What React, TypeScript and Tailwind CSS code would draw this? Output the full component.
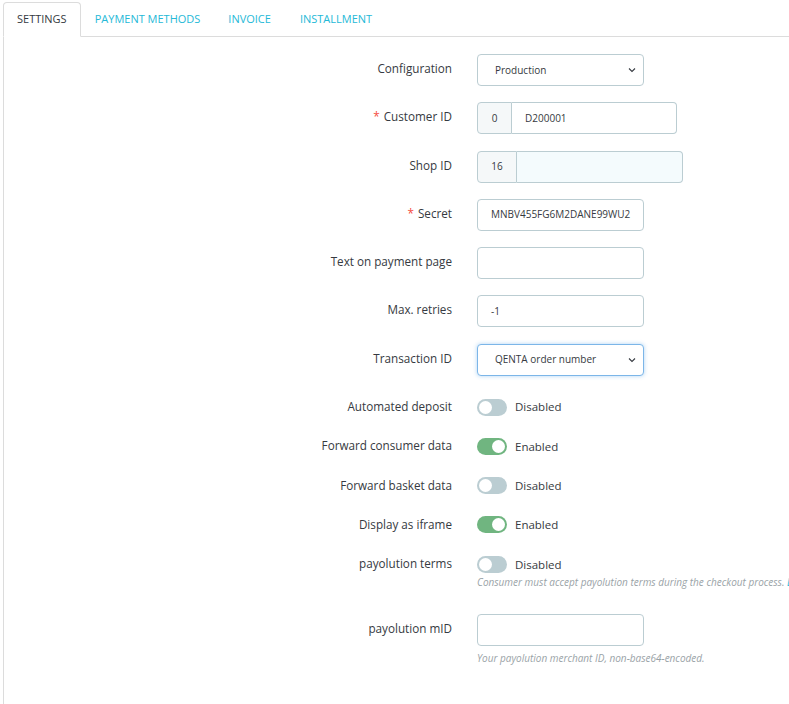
import React from "react";

const font = { fontFamily: '"Open Sans", "Noto Sans", sans-serif' };

function Chevron() {
  return (
    <svg className="pointer-events-none absolute right-[7px] top-1/2 -translate-y-1/2" width="8" height="6" viewBox="0 0 8 6">
      <path d="M1 1.5 L4 4.5 L7 1.5" fill="none" stroke="#363a41" strokeWidth="1.1" />
    </svg>
  );
}

function Label({ children, req }: { children: React.ReactNode; req?: boolean }) {
  return (
    <div className="w-[448px] shrink-0 text-right text-[11.7px] text-[#363a41] pt-[5px] leading-[18px]">
      {req && <span className="text-[#f54c3e] mr-[4px]">*</span>}
      {children}
    </div>
  );
}

function Row({ label, req, children }: { label: string; req?: boolean; children: React.ReactNode }) {
  return (
    <div className="flex gap-[25px] mb-[16.3px]">
      <Label req={req}>{label}</Label>
      <div>{children}</div>
    </div>
  );
}

function Select({ value, focused }: { value: string; focused?: boolean }) {
  return (
    <div
      className={
        "relative w-[167px] h-[32px] rounded-[4px] border bg-white flex items-center pl-[17px] text-[10px] text-[#363a41] " +
        (focused ? "border-[#7cb6e8] shadow-[0_0_4px_rgba(80,160,230,0.45)]" : "border-[#bbcdd2]")
      }
    >
      {value}
      <Chevron />
    </div>
  );
}

function Input({ value, w = 167 }: { value?: string; w?: number }) {
  return (
    <div
      className="h-[32px] rounded-[4px] border border-[#bbcdd2] bg-white flex items-center pl-[13px] text-[10px] text-[#363a41] overflow-hidden whitespace-nowrap"
      style={{ width: w }}
    >
      {value}
    </div>
  );
}

function Group({ addon, value, addonW, w, readOnly }: { addon: string; value?: string; addonW: number; w: number; readOnly?: boolean }) {
  return (
    <div className="flex h-[32px] text-[10px] text-[#363a41]" style={{ width: w }}>
      <div
        className="h-full flex items-center justify-center bg-[#f5f8f9] border border-[#bbcdd2] rounded-l-[4px]"
        style={{ width: addonW }}
      >
        {addon}
      </div>
      <div
        className={
          "flex-1 h-full flex items-center pl-[13px] border border-l-0 border-[#bbcdd2] rounded-r-[4px] " +
          (readOnly ? "bg-[#f4fbfd]" : "bg-white")
        }
      >
        {value}
      </div>
    </div>
  );
}

function Switch({ on }: { on?: boolean }) {
  return (
    <div className="flex items-center">
      <span className={"relative w-[30px] h-[17px] rounded-full " + (on ? "bg-[#70b580]" : "bg-[#bbcdd2]")}>
        <span
          className={"absolute top-[2px] w-[13px] h-[13px] rounded-full bg-white " + (on ? "left-[15px]" : "left-[2px]")}
        />
      </span>
      <span className="ml-[8px] text-[11.5px] text-[#363a41]">{on ? "Enabled" : "Disabled"}</span>
    </div>
  );
}

function Toggle({ label, on, last }: { label: string; on?: boolean; last?: boolean }) {
  return (
    <div className={"flex gap-[25px] items-center h-[18px] " + (last ? "" : "mb-[21.3px]")}>
      <div className="w-[448px] shrink-0 text-right text-[11.7px] text-[#363a41] leading-[18px] -mt-[2px]">{label}</div>
      <Switch on={on} />
    </div>
  );
}

export default function App() {
  return (
    <div className="w-[789px] h-[704px] overflow-hidden bg-white pl-[3px] pt-[2px]" style={font}>
      <div className="flex border-b border-[#dcdcdc] h-[35px]">
        <div className="h-[35px] px-[13px] flex items-center border border-[#dcdcdc] border-b-white rounded-t-[4px] bg-white text-[11px] text-[#363a41] -mb-px">
          SETTINGS
        </div>
        <div className="h-[34px] pl-[14px] pr-[14px] flex items-center text-[11px] text-[#25b9d7]">PAYMENT METHODS</div>
        <div className="h-[34px] pl-[14px] pr-[15px] flex items-center text-[11px] text-[#25b9d7]">INVOICE</div>
        <div className="h-[34px] px-[14px] flex items-center text-[11px] text-[#25b9d7]">INSTALLMENT</div>
      </div>
      <div className="border-l border-[#dcdcdc] h-[700px] pt-[17px]">
        <Row label="Configuration">
          <Select value="Production" />
        </Row>
        <Row label="Customer ID" req>
          <Group addon="0" value="D200001" addonW={35} w={200} />
        </Row>
        <Row label="Shop ID">
          <Group addon="16" addonW={40} w={206} readOnly />
        </Row>
        <Row label="Secret" req>
          <Input value="MNBV455FG6M2DANE99WU2" />
        </Row>
        <Row label="Text on payment page">
          <Input />
        </Row>
        <Row label="Max. retries">
          <Input value="-1" />
        </Row>
        <Row label="Transaction ID">
          <Select value="QENTA order number" focused />
        </Row>
        <div className="h-[6px]" />
        <Toggle label="Automated deposit" />
        <Toggle label="Forward consumer data" on />
        <Toggle label="Forward basket data" />
        <Toggle label="Display as iframe" on />
        <Toggle label="payolution terms" last />
        <div className="pl-[473px] mt-[1px] text-[10px] italic text-[#9aa3a7] whitespace-nowrap leading-[16px]">
          Consumer must accept payolution terms during the checkout process.{" "}
          <span className="text-[#25b9d7]">Link to terms</span>
        </div>
        <div className="h-[24px]" />
        <div className="flex gap-[25px]">
          <Label>payolution mID</Label>
          <div>
            <Input />
            <div className="mt-[4px] text-[10px] italic text-[#9aa3a7] whitespace-nowrap leading-[16px]">
              Your payolution merchant ID, non-base64-encoded.
            </div>
          </div>
        </div>
      </div>
    </div>
  );
}
